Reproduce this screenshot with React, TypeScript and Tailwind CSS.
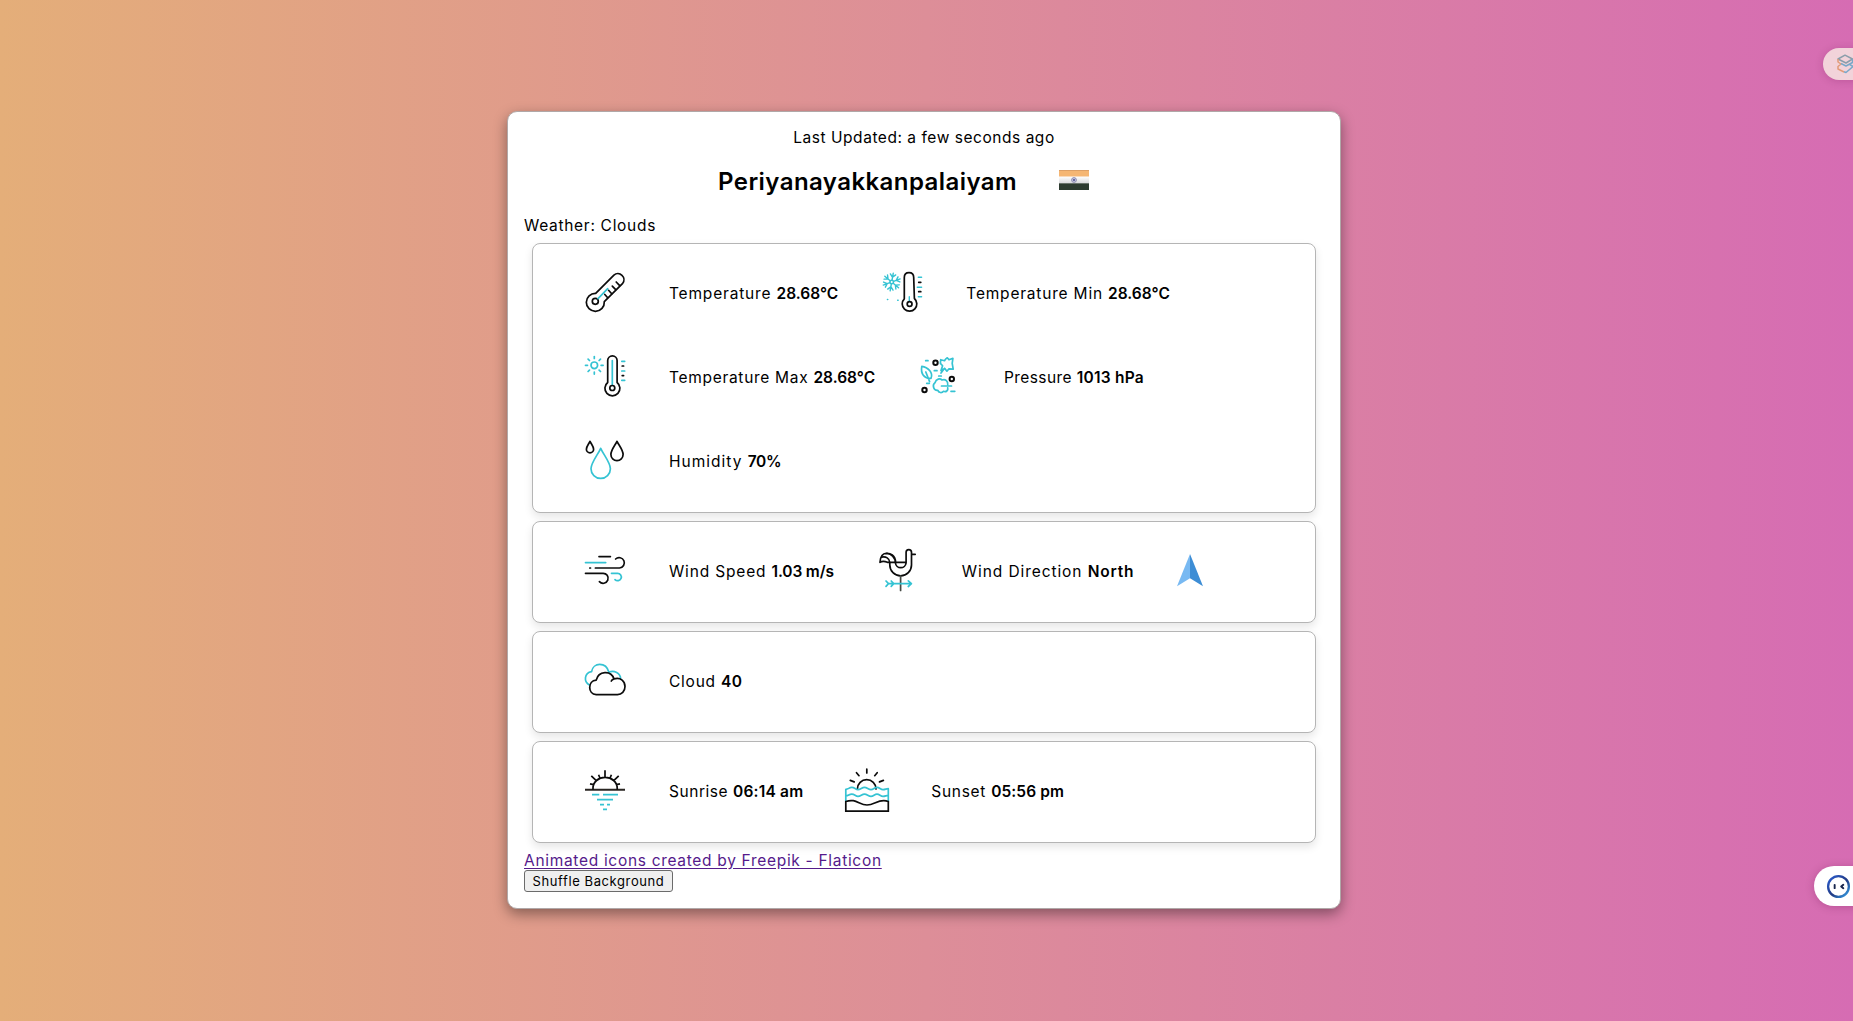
import type { ReactNode } from "react";

const K = "#0c0c0c";
const C = "#35c3d3";

function Icon({ children }: { children: ReactNode }) {
  return (
    <svg viewBox="0 0 64 64" fill="none" stroke={K} strokeWidth="1.7" strokeLinecap="round" strokeLinejoin="round" className="mx-8 mt-2 size-16 shrink-0">
      {children}
    </svg>
  );
}

const Thermometer = () => (
  <Icon>
    <path d="M22.7 33.3 40.9 15.1A6.05 6.05 0 0 1 49.7 23.3L31.3 41.7A9 9 0 1 1 22.7 33.3Z" />
    <circle cx="22.3" cy="41.3" r="3" />
    <path stroke={C} d="M25 38.7 34.7 28.7" />
    <path d="M31.8 34.5 34.7 37.7M35.6 30.3 38.7 33.8M39.3 26.2 42.7 29.6M43.2 22 46.7 25.7" />
  </Icon>
);

const Cold = () => (
  <Icon>
    <g stroke={C} strokeWidth="1.4">
      <circle cx="21.7" cy="22" r="1.8" />
      {[10, 70, 130, 190, 250, 310].map((a) => (
        <path key={a} transform={`rotate(${a} 21.7 22)`} d="M21.7 20V13M19 14.3 21.7 17.2 24.4 14.3" />
      ))}
      <path d="M39.3 36.7V41M48.3 17.3H51.6M47.3 27.3H51.6M48.3 36.7H51.6M17.4 39.5H17.8M27.6 40.3H28.2" />
    </g>
    <path d="M34.3 38.8V17.5Q34.3 12.7 39 12.7T43.7 17.5L44.4 38.5A7.3 7.3 0 1 1 34.3 38.8Z" />
    <circle cx="39.6" cy="44" r="2.4" />
    <path d="M48.7 22.3H50.8M48.7 31.7H50.8" />
  </Icon>
);

const Hot = () => (
  <Icon>
    <g transform="translate(0 -2.7)">
      <g stroke={C}>
        <circle cx="21.3" cy="24" r="3.3" />
        {[0, 45, 90, 135, 180, 225, 270, 315].map((a) => (
          <path key={a} transform={`rotate(${a} 21.3 24)`} d="M21.3 17.2V15.2" />
        ))}
        <path d="M39.3 19.3V43.8M48.8 20H51.7M48.8 29.7H51.7M48.8 39H51.7" />
      </g>
      <path d="M34.7 41.2V19.3A4.7 4.7 0 0 1 44.1 19.3V41.2A7.5 7.5 0 1 1 34.7 41.2Z" />
      <circle cx="39.3" cy="46.7" r="2.5" />
      <path d="M49.2 24.7H50.6M49.2 34.3H50.6" />
    </g>
  </Icon>
);

const Leaves = () => (
  <Icon>
    <g stroke={C} strokeWidth="1.7">
      <path d="M13.8 22.3C20 23 25.5 29 23 34.3C16 35 12.5 29.5 13.8 22.3ZM17.8 28 21.6 37.6" />
      <path d="M32.7 15.7 36.6 16.7C37.4 15 38.6 14.2 39.3 13.8L41 15.8 44.9 14.3 44.2 19.4 45.2 25.2 41 24.8 38.9 27.2 36.8 24.4 33 26.5 34.6 21.8 32.4 19.4ZM36.6 24.3 33 29" />
      <path d="M27 38.7C28.2 34.5 32 34.3 34 36C37.5 34.5 40.2 37.5 39.7 40.5M39.7 43.8C40.4 46.5 38 48.5 35.5 47.3C34 49.2 30.5 49 29.8 46.3C25.4 46.8 24 41 27 38.7M33.5 42H43.5" />
      <path d="M17.7 16.7H20M26.3 26.7H29M30.7 32H33.3M18.7 39.3H21.3M43 47.3H46.8" />
    </g>
    <g strokeWidth="2"><circle cx="27.5" cy="18.7" r="2.2" /><circle cx="43.8" cy="35" r="2.2" /><circle cx="16.5" cy="46" r="2.2" /></g>
  </Icon>
);

const Drops = () => (
  <Icon>
    <path d="M17 13.3C15.8 16 13.4 18.6 13.4 21.2A3.6 3.6 0 0 0 20.6 21.2C20.6 18.6 18.2 16 17 13.3Z" />
    <path d="M44 13.3C42.2 17.2 37.9 22 37.9 26.5A6.1 6.1 0 0 0 50.1 26.5C50.1 22 45.8 17.2 44 13.3Z" />
    <path stroke={C} d="M27.7 20.3C25 26.5 18 34.5 18 40.7A9.7 9.7 0 0 0 37.4 40.7C37.4 34.5 30.4 26.5 27.7 20.3Z" />
  </Icon>
);

const Wind = () => (
  <Icon>
    <path d="M26 18.6H37.4M42.6 21A5.2 5.2 0 1 1 46.5 30H22.4M16.8 30H17.5M12.5 35.3H29.8A5 5 0 1 1 26.4 43.6" />
    <path stroke={C} d="M12.5 24.6H32.7M38.5 35.3H44.6A3.7 3.7 0 1 1 42 41.6" />
  </Icon>
);

const Rooster = () => (
  <Icon>
    <path d="M23.8 24.3V27A10.8 10.8 0 0 0 45.5 27V14.3A2.7 2.7 0 0 0 40.1 14.3V25A5.4 5.4 0 0 1 29.4 25C29.4 19 25 15.8 21 15.3C16.8 14.7 14.2 18.5 14 24.3C17 22.4 19.8 23.6 21.4 24.3H39.8M15.2 19.3C20 18 23.4 20.4 23.8 24.3M18.4 15.7C24.6 14 29.4 18 29.6 24.3M45.5 16.3H49.2" />
    <path stroke="#454a44" d="M34.6 38V52.4" />
    <path stroke={C} d="M22 45.7H45.3M42.3 42.9 45.4 45.7 42.3 48.5M20 43 22.5 45.7 20 48.4M25.2 43 27.7 45.7 25.2 48.4" />
  </Icon>
);

const Clouds = () => (
  <Icon>
    <path stroke={C} d="M16.5 37C10.4 33.8 11.2 24.8 18.6 23.6C20 14.3 33 13.6 35.9 24.3C41 21.6 47.5 25.2 47.6 30.6" />
    <path d="M23.2 46.6C14.5 46.3 14.6 32.8 23.2 32.1C25.5 22.8 38 22 41 30.9C48 29 52 33.5 52 38.5C52 43.5 48.6 46.6 44.5 46.6ZM41 30.9C39.6 31.3 38.7 32.1 38.3 33" />
  </Icon>
);

const Sunrise = () => (
  <Icon>
    <path strokeLinecap="butt" stroke="#292522" strokeWidth="1.9" d="M12 31.8H52" />
    <path strokeLinecap="butt" d="M20 31.7V30A12.1 10.6 0 0 1 44.2 30V31.7M32 12.3V19.7M18.3 17.8 23 22.3M45.7 17.8 41 22.3M17 25.8 20.7 26.7M47 25.8 43.3 26.7M25.6 16.8 27 20.3M38.4 16.8 37 20.3" />
    <path stroke={C} strokeLinecap="butt" d="M19 36.6H26.3M30 36.6H45M24 41.7H40M27 46.6H31M34 46.6H37M30 51.4H34" />
  </Icon>
);

const Sunset = () => (
  <Icon>
    <path d="M22.4 31A9.3 9.3 0 1 1 41 31M31.8 11.2V15M21.5 14.7 24 17.7M42.2 14.7 39.7 17.7M15.3 22.4 19.2 23.9M48.4 22.4 44.5 23.9" />
    <path stroke={C} d="M10.8 43V31.3C13.5 31.3 14 29.4 16.8 29.4S20.5 31.6 23 31.6 27 29.4 29.5 29.4 33.5 31.6 36 31.6 39.5 29.4 42 29.4 45.5 31.6 48 31.6 51 30.7 53.3 30.7V43M10.8 38C13.5 38 14 36.1 16.8 36.1S20.5 38.3 23 38.3 27 36.1 29.5 36.1 33.5 38.3 36 38.3 39.5 36.1 42 36.1 45.5 38.3 48 38.3 51 37.4 53.3 37.4" />
    <path strokeLinejoin="miter" d="M10.8 43.5C21 40 24 47 32 47S44 40 53.3 43.5V53.2H10.8Z" />
  </Icon>
);

const DirectionArrow = () => (
  <svg viewBox="0 0 48 48" className="ml-8 size-12 shrink-0">
    <path fill="#78b9f2" d="M24 8V32.2L11 40.2Z" />
    <path fill="#3d8dd5" d="M24 8V32.2L37 40.2Z" />
  </svg>
);

type ReadingProps = { icon: ReactNode; label: string; value: string; box: string; ls: string; vs: string };

function Reading({ icon, label, value, box, ls, vs }: ReadingProps) {
  return (
    <div className="flex h-[84px]">
      {icon}
      <div className={`mt-[29.5px] whitespace-pre text-[15.5px] leading-6 ${box}`}>
        <span className={ls}>{label} </span>
        <strong className={`font-semibold ${vs}`}>{value}</strong>
      </div>
    </div>
  );
}

function Group({ children }: { children: ReactNode }) {
  return (
    <section className="mx-2 mb-2 flex flex-wrap rounded-lg border border-[#b5b5b5] bg-white p-2 shadow-[0_4px_8px_rgba(0,0,0,0.1)]">
      {children}
    </section>
  );
}

function Flag() {
  return (
    <svg viewBox="0 0 30 20" className="h-5 w-[30px]">
      <defs>
        <linearGradient id="band" x2="0" y2="1">
          <stop stopColor="#fff" />
          <stop offset="1" stopColor="#d9d9dc" />
        </linearGradient>
      </defs>
      <path fill="#f5b673" d="M0 0H30V7H0Z" />
      <path stroke="#dda066" strokeWidth="1" d="M0 .5H30" />
      <path fill="url(#band)" d="M0 6.5H30V13.3H0Z" />
      <path fill="#2d3b30" d="M0 13.3H30V20H0Z" />
      <circle cx="15" cy="10" r="2.4" fill="#c9c9df" stroke="#8585ad" strokeWidth=".9" />
      <circle cx="15" cy="10" r="1" fill="#4b4b8d" />
    </svg>
  );
}

export default function App() {
  return (
    <div className="relative flex h-[1021px] flex-col items-center overflow-hidden bg-[linear-gradient(90deg,#e4ae79_0%,#dd8e98_50%,#d66cb3_100%)] pt-[111px] font-['Inter',sans-serif] text-black">
      <main className="mr-[5px] h-[798px] w-[834px] rounded-[10px] border border-[#b0a8a8] bg-white pt-[14px] pr-4 pb-4 pl-4 shadow-[0_5px_14px_rgba(0,0,0,0.4)]">
        <p className="text-center text-[15.5px] leading-6 tracking-[0.54px]">Last Updated: a few seconds ago</p>
        <div className="mt-4 ml-[194px] flex h-8">
          <h1 className="w-[341px] text-2xl leading-8 font-semibold tracking-[0.44px]">Periyanayakkanpalaiyam</h1>
          <div className="pt-1"><Flag /></div>
        </div>
        <p className="mt-4 mb-[5px] text-[15.5px] leading-6 tracking-[0.7px]">Weather: Clouds</p>
        <div>
          <Group>
            <Reading icon={<Thermometer />} label="Temperature" value="28.68°C" box="w-[169.3px]" ls="tracking-[0.82px]" vs="tracking-normal" />
            <div className="grow basis-[400px]">
              <Reading icon={<Cold />} label="Temperature Min" value="28.68°C" box="w-[204px]" ls="tracking-[0.8px]" vs="tracking-normal" />
            </div>
            <Reading icon={<Hot />} label="Temperature Max" value="28.68°C" box="w-[207px]" ls="tracking-[0.7px]" vs="tracking-normal" />
            <div className="grow basis-[400px]">
              <Reading icon={<Leaves />} label="Pressure" value="1013 hPa" box="w-[141px]" ls="tracking-[0.4px]" vs="tracking-[0.25px]" />
            </div>
            <Reading icon={<Drops />} label="Humidity" value="70%" box="w-[113px]" ls="tracking-[1px]" vs="tracking-[-0.3px]" />
          </Group>
          <Group>
            <Reading icon={<Wind />} label="Wind Speed" value="1.03 m/s" box="w-[164.8px]" ls="tracking-[0.83px]" vs="tracking-[-0.15px]" />
            <Reading icon={<Rooster />} label="Wind Direction" value="North" box="w-[172.4px]" ls="tracking-[0.92px]" vs="tracking-[0.8px]" />
            <div className="pt-4"><DirectionArrow /></div>
          </Group>
          <Group>
            <Reading icon={<Clouds />} label="Cloud" value="40" box="w-[74px]" ls="tracking-[0.77px]" vs="tracking-[0.4px]" />
          </Group>
          <Group>
            <Reading icon={<Sunrise />} label="Sunrise" value="06:14 am" box="w-[134.3px]" ls="tracking-[0.54px]" vs="tracking-[0.2px]" />
            <Reading icon={<Sunset />} label="Sunset" value="05:56 pm" box="w-[134px]" ls="tracking-[0.7px]" vs="tracking-[0.1px]" />
          </Group>
        </div>
        <a href="#" className="block h-[19px] w-fit text-[15.5px] leading-5 tracking-[0.69px] text-[#551a8b] underline underline-offset-2">Animated icons created by Freepik - Flaticon</a>
        <button className="block h-[22px] w-[149px] rounded-[3px] border border-[#6b6b6b] bg-[#efefef] text-[13px] leading-5 tracking-[0.6px]">Shuffle Background</button>
      </main>

      <div className="absolute top-[48px] right-[-10px] flex h-8 w-10 items-center rounded-l-full bg-[#f2d3da] pl-[14px] shadow-[0_1px_8px_rgba(90,0,60,0.2)]">
        <svg viewBox="0 0 18 20" fill="none" strokeWidth="1.5" strokeLinejoin="round" className="h-5 w-[18px]">
          <path stroke="#8b9eab" d="M1 5 8 1.2 15.5 5 9 9Z" />
          <path stroke="#e29b78" d="M1 5V8L4 10 1 12.5V15L7 18" />
          <path stroke="#78a8c9" d="M4 9.5 9 12 15.5 8.5V5M12.5 10.3 16 12.5 9 18.5 7 17.7" />
        </svg>
      </div>
      <div className="absolute top-[866px] right-[-12px] flex h-10 w-[51px] items-center rounded-l-full bg-white pl-[12px] shadow-[0_1px_8px_rgba(90,0,60,0.25)]">
        <svg viewBox="0 0 26 26" fill="none" className="size-[25px]">
          <defs>
            <linearGradient id="ring" x2="1" y2="1">
              <stop stopColor="#2b5ed2" />
              <stop offset=".55" stopColor="#223a82" />
              <stop offset="1" stopColor="#36a5ed" />
            </linearGradient>
          </defs>
          <circle cx="13" cy="13" r="10.8" stroke="url(#ring)" strokeWidth="2.4" />
          <path stroke="#19264d" strokeWidth="2" strokeLinecap="round" strokeLinejoin="round" d="M9 11.3V14.7M18 11.2 15.8 13 18 14.8" />
        </svg>
      </div>
    </div>
  );
}
